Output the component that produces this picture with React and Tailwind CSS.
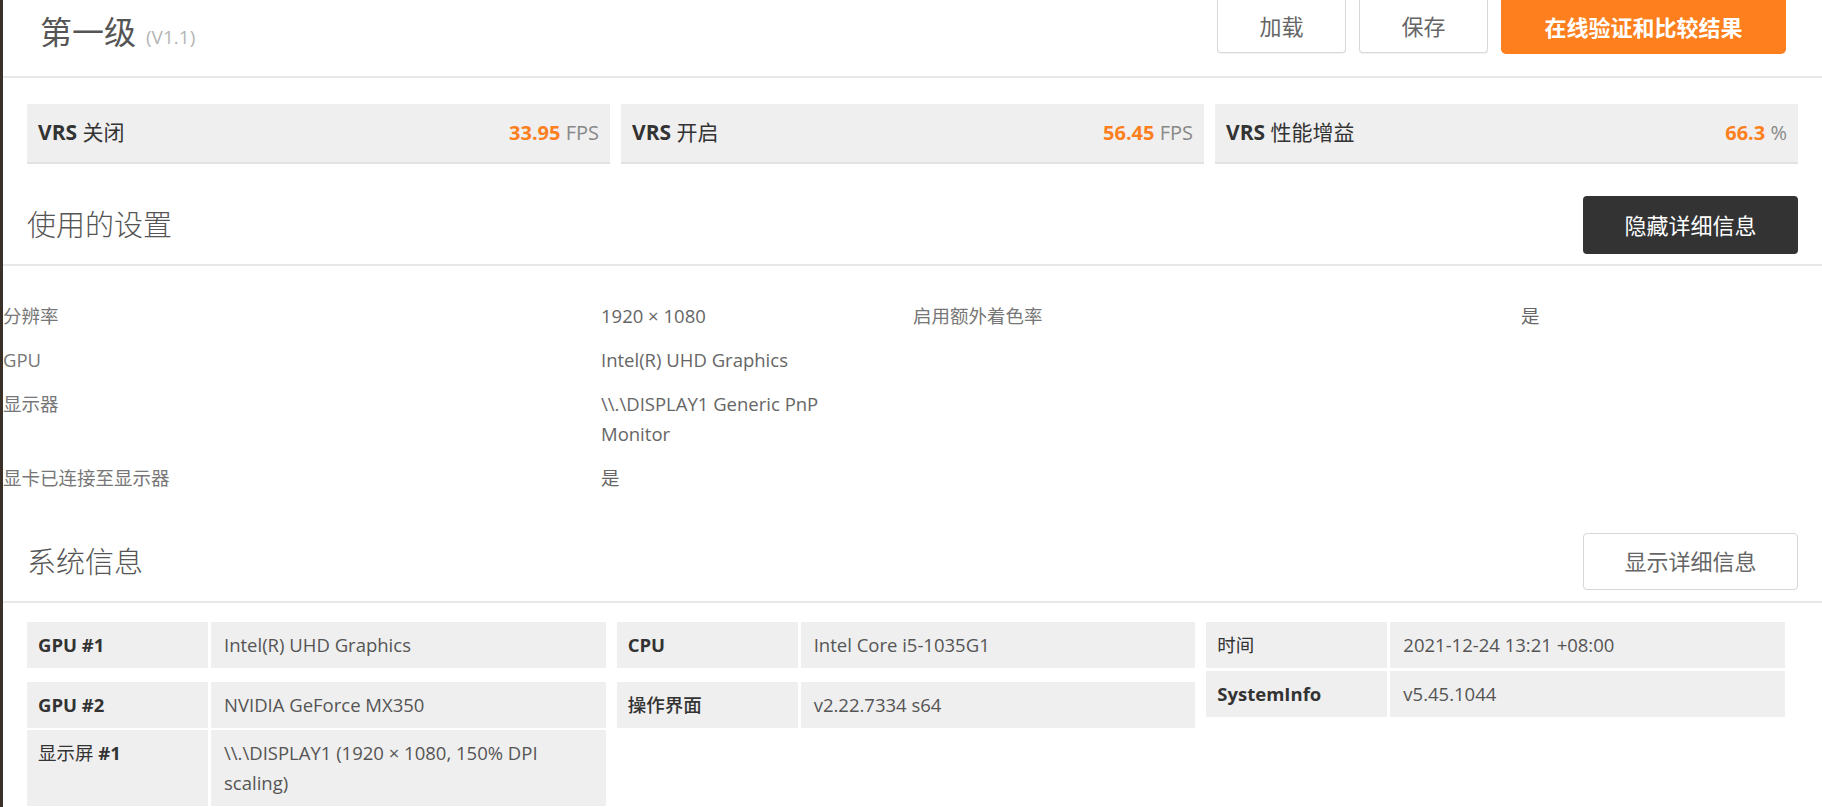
import React from "react"

const vrs = [
  { label: "关闭", value: "33.95", unit: "FPS" },
  { label: "开启", value: "56.45", unit: "FPS" },
  { label: "性能增益", value: "66.3", unit: "%" },
]

const settings = [
  ["分辨率", "1920 × 1080", "启用额外着色率", "是"],
  ["GPU", "Intel(R) UHD Graphics", "", ""],
  ["显示器", "\\\\.\\DISPLAY1 Generic PnP Monitor", "", ""],
  ["显卡已连接至显示器", "是", "", ""],
]

function InfoRow({ label, value, className = "" }) {
  return (
    <div className={`flex gap-[3px] ${className}`}>
      <div className="w-[181px] shrink-0 bg-[#efefef] px-[11px] py-[8px] leading-[30px] text-[18.5px] text-[#333]">
        {label}
      </div>
      <div className="flex-1 bg-[#efefef] pl-[13px] pr-[30px] py-[8px] leading-[30px] text-[18.5px] text-[#555]">
        {value}
      </div>
    </div>
  )
}

export default function App() {
  return (
    <div className="min-h-screen w-[1822px] bg-white border-l-[3px] border-[#3a3027] font-['Open_Sans','Noto_Sans_CJK_SC',sans-serif] overflow-hidden">
      {/* Header */}
      <div className="h-[78px] flex items-start justify-between border-b-2 border-[#e8e8e8] pl-[37px] pr-[36px]">
        <div className="mt-[10px] flex items-baseline gap-[10px]">
          <span className="text-[32px] leading-[44px] text-[#555]">第一级</span>
          <span className="text-[19px] text-[#b5b5b5]">(V1.1)</span>
        </div>
        <div className="flex gap-[13px]">
          <button className="w-[129px] h-[53px] border border-t-0 border-[#d9d9d9] rounded-b-[4px] text-[22px] text-[#666] bg-white shadow-[0_1px_1px_rgba(0,0,0,0.06)]">
            加载
          </button>
          <button className="w-[129px] h-[53px] border border-t-0 border-[#d9d9d9] rounded-b-[4px] text-[22px] text-[#666] bg-white shadow-[0_1px_1px_rgba(0,0,0,0.06)]">
            保存
          </button>
          <button className="w-[285px] h-[54px] bg-[#fd7f1e] rounded-b-[5px] text-[22px] font-bold text-white">
            在线验证和比较结果
          </button>
        </div>
      </div>

      {/* VRS results */}
      <div className="grid grid-cols-3 gap-[11px] pl-[24px] pr-[24px] mt-[26px]">
        {vrs.map((v) => (
          <div key={v.label} className="h-[60px] bg-[#efefef] border-b-2 border-[#e2e2e2] flex items-center justify-between px-[11px]">
            <div className="text-[21px] text-[#333]">
              <span className="font-bold">VRS</span> {v.label}
            </div>
            <div className="text-[20px]">
              <span className="font-bold text-[#fd7f1e]">{v.value}</span>{" "}
              <span className="text-[#888]">{v.unit}</span>
            </div>
          </div>
        ))}
      </div>

      {/* Settings */}
      <div className="flex items-center justify-between pl-[24px] pr-[24px] pt-[32px] pb-[10px] border-b-2 border-[#e8e8e8]">
        <h2 className="text-[29px] font-light text-[#555]">使用的设置</h2>
        <button className="w-[215px] h-[58px] bg-[#333] rounded-[4px] text-[22px] text-white">
          隐藏详细信息
        </button>
      </div>
      <div className="grid grid-cols-[598px_312px_608px_1fr] pt-[28px] text-[18.5px]">
        {settings.map((row, i) => (
          <React.Fragment key={i}>
            <div className="py-[7px] leading-[30px] text-[#777]">{row[0]}</div>
            <div className="py-[7px] pr-[60px] leading-[30px] text-[#666]">{row[1]}</div>
            <div className="py-[7px] leading-[30px] text-[#777]">{row[2]}</div>
            <div className="py-[7px] leading-[30px] text-[#666]">{row[3]}</div>
          </React.Fragment>
        ))}
      </div>

      {/* System info */}
      <div className="flex items-center justify-between pl-[24px] pr-[24px] pt-[33px] pb-[11px] border-b-2 border-[#e8e8e8]">
        <h2 className="text-[29px] font-light text-[#555]">系统信息</h2>
        <button className="w-[215px] h-[57px] bg-white border border-[#d6d6d6] rounded-[4px] text-[22px] text-[#666]">
          显示详细信息
        </button>
      </div>
      <div className="grid grid-cols-3 gap-[11px] pl-[24px] pr-[37px] pt-[19px] items-start">
        <div className="flex flex-col">
          <InfoRow label={<span className="font-bold">GPU #1</span>} value="Intel(R) UHD Graphics" />
          <InfoRow label={<span className="font-bold">GPU #2</span>} value="NVIDIA GeForce MX350" className="mt-[14px]" />
          <InfoRow
            label={<span>显示屏 <span className="font-bold">#1</span></span>}
            value="\\.\DISPLAY1 (1920 × 1080, 150% DPI scaling)"
            className="mt-[2px]"
          />
        </div>
        <div className="flex flex-col">
          <InfoRow label={<span className="font-bold">CPU</span>} value="Intel Core i5-1035G1" />
          <InfoRow label={<span className="font-medium">操作界面</span>} value="v2.22.7334 s64" className="mt-[14px]" />
        </div>
        <div className="flex flex-col">
          <InfoRow label="时间" value="2021-12-24 13:21 +08:00" />
          <InfoRow label={<span className="font-bold">SystemInfo</span>} value="v5.45.1044" className="mt-[3px]" />
        </div>
      </div>
    </div>
  )
}
